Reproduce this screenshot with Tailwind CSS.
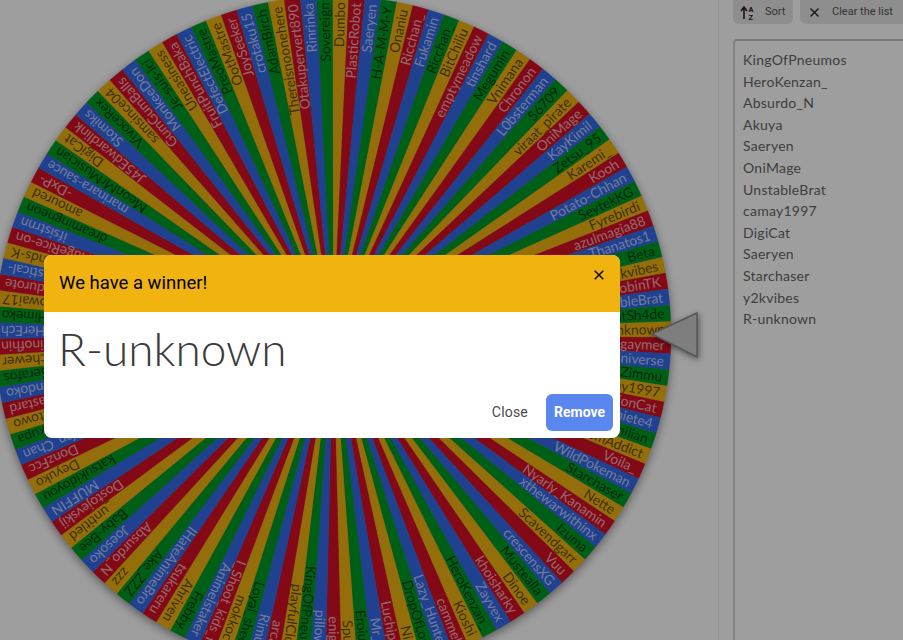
<!DOCTYPE html>
<html lang="en">
<head>
    <meta charset="UTF-8">
    <title>Wheel of Names</title>
    <script src="https://cdn.jsdelivr.net/npm/@tailwindcss/browser@4"></script>
</head>
<body class="m-0 bg-white overflow-hidden">
    <div class="relative flex w-[903px] h-[640px] overflow-hidden bg-white font-['Lato',sans-serif]">
        <main class="w-[718px] h-full shrink-0">
            <svg id="wheel" width="718" height="640" viewBox="0 0 718 640" class="block"></svg>
        </main>
        <aside class="flex-1 min-w-0 border-l border-[#ececec] pl-[14px] flex flex-col">
            <div class="flex gap-[7px] h-[24px] shrink-0 whitespace-nowrap font-['Roboto',sans-serif] text-[11px] text-[#555]">
                <div class="w-[60px] rounded-b-md bg-[#e6e6e6] flex items-center pl-[7px] gap-[9px]">
                    <svg width="16" height="15" viewBox="0 0 16 15">
                        <path d="M4 14V3M1 6l3-4 3 4" fill="none" stroke="#222" stroke-width="1.6"/>
                        <text x="8.5" y="7" font-size="7.5" font-weight="700" font-family="Roboto" fill="#222">A</text>
                        <text x="8.5" y="14.5" font-size="7.5" font-weight="700" font-family="Roboto" fill="#222">Z</text>
                    </svg>
                    <span>Sort</span>
                </div>
                <div class="flex-1 rounded-bl-md bg-[#e6e6e6] flex items-center pl-[10px] gap-[13px]">
                    <svg width="9" height="9" viewBox="0 0 9 9" class="shrink-0">
                        <path d="M.5.5l8 8M8.5.5l-8 8" fill="none" stroke="#222" stroke-width="1.4"/>
                    </svg>
                    <span>Clear the list</span>
                </div>
            </div>
            <div class="mt-[15px] flex-1 border-2 border-r-0 border-b-0 border-[#d4d4d4] border-t-[#c4c4c4] rounded-tl-sm pt-[8px] pl-[8px] text-[14px] leading-[21.6px] text-[#666] tracking-[0.25px]">
                <div>KingOfPneumos</div>
                <div>HeroKenzan_</div>
                <div>Absurdo_N</div>
                <div>Akuya</div>
                <div>Saeryen</div>
                <div>OniMage</div>
                <div>UnstableBrat</div>
                <div>camay1997</div>
                <div>DigiCat</div>
                <div>Saeryen</div>
                <div>Starchaser</div>
                <div>y2kvibes</div>
                <div>R-unknown</div>
            </div>
        </aside>

        <div class="absolute inset-0 bg-black/[0.38]"></div>

        <div class="absolute left-[44px] top-[255px] w-[576px] h-[183px] rounded-lg overflow-hidden bg-white flex flex-col font-['Roboto',sans-serif]">
            <header class="h-[57px] shrink-0 bg-[#f0b310] flex justify-between pl-[15px] pr-[16px]">
                <h2 class="text-[18.5px] font-normal leading-[56px] text-black">We have a winner!</h2>
                <svg width="10" height="10" viewBox="0 0 10 10" class="mt-[15px]">
                    <path d="M.7.7l8.6 8.6M9.3.7L.7 9.3" fill="none" stroke="#111" stroke-width="1.6"/>
                </svg>
            </header>
            <div class="flex-1 pl-[14px] pt-[7px] font-['Lato',sans-serif] font-light text-[46px] leading-[60px] text-[#3a3a3a]">R-unknown</div>
            <footer class="flex justify-end items-center gap-[18px] pr-[7px] pb-[7px] text-[14px]">
                <span class="text-[#4a4a4a] tracking-[0.2px]">Close</span>
                <span class="w-[67px] h-[37px] rounded-md bg-[#5a86ef] text-white font-bold flex items-center justify-center">Remove</span>
            </footer>
        </div>
    </div>

    <script>
        // wheel entries, clockwise from the slice at the top
        const names = ["Dumbo","PlasticRobot","Saeryen","H-A-M-M-Y","Onaniu","Ricchan_","Fukamin","Ricchan_","BitChiliu","emptymeadow","tinshard","Megumin","Vnimana","Chronon","L0bsterman","56709","viraat_pirate","OniMage","KayKimil","Zetsu_95","Karemi_","Kooh","Potato-Chhan","SeytekKG","Fyrebirdi","azulmagia88","Thanatos1","Beta","y2kvibes","RobinTK","UnstableBrat","NightSh4de","R-unknown","Zogaymer","TheUniverse","Zimmu","camay1997","MillionCat","Ashiete4","Maximilian","RandomAddict","Voila_","WildPokeman","Starchaser","Nette","Nyarly_Kanamin","xthewarwithinx","Izuma","Scavendgarr","Vuu","crescensXG","Mustealla","Dinoe","khoisharky","Zayvex","HeroKenzan_","Kioshi","cammel","Lazy_Hunter","DropOfLove","Nichi","Luchipher","Mr_Lee","Eroiusert","Spuddy","enigmas","pillowofy","KingOfPneumos","playfulClown","arcade","Rimuru","Loyal_sheep","mokkoco","I_Shoot_kids_f","Animelstaker","Frebby","Ahriven","tsukareru","IHateAnimeBro","Ake_ZZZ","zzz","Absurdo_N","Joesoko","Baby-Bee","_untitled","Dostojevskij","MUFFIN","katsukidoyou","Deyuko","DonzFcc","Yen_Chan","Nekupa","Chitowo","Bastard","Kendoko","Serafos","Nischewer","Pinofhin","HerEch","Himeko","Towai17","Redurote","Mastical-","Hands-K","HugeRice-on","ifsistrnn","dreamingneon","amoured","-DxP-","marinara-sauce","MeonMrMusician","DigiCat","J45Edwardlink","Stomiks","VivoceRex","samsince04","GumGumBalls","MonkeeDon","Je-suis-ici","Uneasiness","FruitPunchBaka","DefectElectric","PreoMastre","OotMastre","JoySeeker","crotaku15","AdamBirch","Thereisnoonehere","Otakupervert890","Rinrinka","Sovereign"];
        const colors = ["#eeb211", "#d50f25", "#3369e8", "#009925"];
        const ink = ["rgba(0,0,0,.6)", "rgba(255,255,255,.65)", "rgba(255,255,255,.65)", "rgba(0,0,0,.6)"];
        const cx = 333, cy = 334, r = 338;
        const step = 360 / names.length;
        const start = -88.7;
        let out = '<g style="filter:drop-shadow(0 3px 5px rgba(0,0,0,.45))">';
        names.forEach((name, i) => {
            const c = (i + 28) % names.length % 4;
            const a = (start + i * step - step / 2) * Math.PI / 180;
            const b = (start + i * step + step / 2) * Math.PI / 180;
            out += `<path d="M${cx} ${cy}L${cx + r * Math.cos(a)} ${cy + r * Math.sin(a)}A${r} ${r} 0 0 1 ${cx + r * Math.cos(b)} ${cy + r * Math.sin(b)}Z" fill="${colors[c]}" stroke="${colors[c]}" stroke-width=".3"/>`;
        });
        out += '</g>';
        names.forEach((name, i) => {
            const c = (i + 28) % names.length % 4;
            out += `<text transform="translate(${cx} ${cy}) rotate(${start + i * step})" x="${r - 6}" y="4.6" text-anchor="end" font-family="Lato" font-size="13.8" fill="${ink[c]}">${name}</text>`;
        });
        out += '<polygon points="652,334 697,313 697,357" fill="#cccccc" stroke="#8c8c8c" stroke-width="1.5" style="filter:drop-shadow(1px 2px 3px rgba(0,0,0,.5))"/>';
        document.getElementById('wheel').innerHTML = out;
    </script>
</body>
</html>
